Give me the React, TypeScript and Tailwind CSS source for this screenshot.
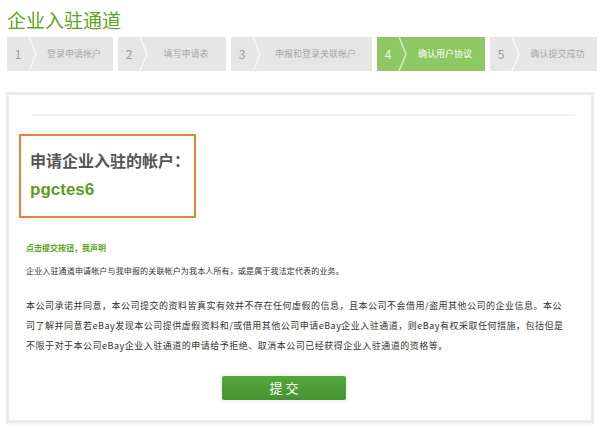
const steps = [
  { n: '1', label: '登录申请帐户', w: 'w-[106px]' },
  { n: '2', label: '填写申请表', w: 'w-[108px]' },
  { n: '3', label: '申报和登录关联帐户', w: 'w-[141px]' },
  { n: '4', label: '确认用户协议', w: 'w-[108px]', active: true },
  { n: '5', label: '确认提交成功', w: 'w-[107px]' },
];

function Step({ n, label, w, active }: { n: string; label: string; w: string; active?: boolean }) {
  return (
    <div className={`relative flex h-[34px] items-center ${w} ${active ? 'bg-[#8dc862]' : 'bg-[#e6e6e6]'}`}>
      <span className={`w-[22px] text-center text-[12px] ${active ? 'text-[#eef7e6]' : 'text-[#9a9a9a]'}`}>{n}</span>
      <svg className="absolute left-[21px] top-0" width="10" height="34" viewBox="0 0 10 34">
        <polyline points="1,0 8,17 1,34" fill="none" stroke={active ? '#d6edc4' : '#f6f6f6'} strokeWidth="1.5" />
      </svg>
      <span className={`flex-1 pl-[6px] text-center text-[9px] ${active ? 'text-white' : 'text-[#a8a8a8]'}`}>{label}</span>
    </div>
  );
}

export default function App() {
  return (
    <div className="h-[430px] w-[600px] bg-white font-['Noto_Sans_CJK_SC',sans-serif]">
      <h1 className="pl-[7px] pt-[8px] text-[19px] leading-[24px] text-[#5ea31f]">企业入驻通道</h1>

      {/* steps */}
      <div className="ml-[7px] mt-[5px] flex gap-[5px]">
        {steps.map((s) => (
          <Step key={s.n} {...s} />
        ))}
      </div>

      {/* panel */}
      <div className="mx-[6px] mt-[21px] h-[331px] border-[3px] border-[#ebebeb] shadow-[0_1px_2px_rgba(0,0,0,0.08)]">
        <div className="ml-[23px] mr-[16px] mt-[19px] h-[2px] bg-[#f0f0f0]" />

        <div className="ml-[10px] mt-[18px] h-[84px] w-[177px] border-2 border-[#ee7f3c] pl-[9px] pt-[14px]">
          <p className="text-[16px] font-bold leading-[20px] text-[#555]">申请企业入驻的帐户：</p>
          <p className="mt-[10px] font-['Liberation_Sans',sans-serif] text-[17px] font-bold leading-[20px] text-[#5c9d1f]">pgctes6</p>
        </div>

        <p className="ml-[17px] mt-[23px] text-[8px] font-bold leading-[14px] text-[#5ea31f]">点击提交按钮，我声明</p>
        <p className="ml-[17px] mt-[9px] text-[8px] leading-[14px] tracking-[0.15px] text-[#333]">
          企业入驻通道申请帐户与我申报的关联帐户为我本人所有，或是属于我法定代表的业务。
        </p>

        <div className="ml-[17px] mt-[18px] text-[9px] leading-[20px] tracking-[0.5px] text-[#333]">
          <p className="whitespace-nowrap">本公司承诺并同意，本公司提交的资料皆真实有效并不存在任何虚假的信息，且本公司不会借用/盗用其他公司的企业信息。本公</p>
          <p className="whitespace-nowrap">司了解并同意若eBay发现本公司提供虚假资料和/或借用其他公司申请eBay企业入驻通道，则eBay有权采取任何措施，包括但是</p>
          <p className="whitespace-nowrap">不限于对于本公司eBay企业入驻通道的申请给予拒绝、取消本公司已经获得企业入驻通道的资格等。</p>
        </div>

        <div className="mt-[20px] flex">
          <button className="ml-[213px] h-[24px] w-[124px] rounded-[2px] bg-gradient-to-b from-[#55a83c] to-[#43922f] text-[13px] leading-[24px] text-white shadow-[0_0_0_3px_#f7f7f7]">
            提 交
          </button>
        </div>
      </div>
    </div>
  );
}
